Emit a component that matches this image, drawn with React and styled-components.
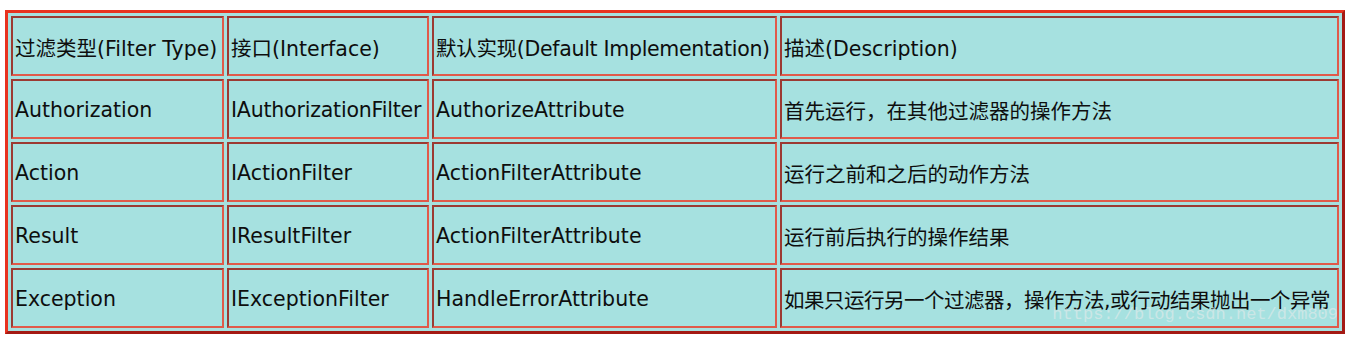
import React from "react";
import styled, { createGlobalStyle } from "styled-components";

const Global = createGlobalStyle`
  html, body { margin: 0; padding: 0; background: #ffffff; }
  body { font-family: "DejaVu Sans", "Noto Sans CJK SC", sans-serif; }
`;

const Page = styled.div`
  padding: 10px 0 0 5px;
`;

const Frame = styled.div`
  position: relative;
  width: 1340px;
  height: 324px;
  box-sizing: border-box;
  border: 3px solid;
  border-color: #e8321f #a41a14 #a41a14 #e8321f;
  background: #a6e1e0;
  padding: 3px;
  display: grid;
  grid-template-columns: 213px 202px 345px 559px;
  grid-auto-rows: 60px;
  gap: 3px;
`;

const Cell = styled.div`
  box-sizing: border-box;
  border: 2px solid;
  border-color: #9c3a33 #e05a4a #e05a4a #9c3a33;
  display: flex;
  align-items: center;
  padding: 2px 2px 0 2px;
  font-family: "DejaVu Sans", "Noto Sans CJK SC", sans-serif;
  font-size: 20.5px;
  color: #0e0e0e;
  white-space: nowrap;
  overflow: hidden;
  letter-spacing: ${(p) => p.$ls || 0}px;
`;

const Watermark = styled.div`
  position: absolute;
  right: 4px;
  bottom: 7px;
  font-family: "Liberation Mono", monospace;
  font-size: 17px;
  color: rgba(236, 236, 236, 0.55);
  pointer-events: none;
`;

const rows = [
  ["过滤类型(Filter Type)", "接口(Interface)", "默认实现(Default Implementation)", "描述(Description)"],
  ["Authorization", "IAuthorizationFilter", "AuthorizeAttribute", "首先运行，在其他过滤器的操作方法"],
  ["Action", "IActionFilter", "ActionFilterAttribute", "运行之前和之后的动作方法"],
  ["Result", "IResultFilter", "ActionFilterAttribute", "运行前后执行的操作结果"],
  ["Exception", "IExceptionFilter", "HandleErrorAttribute", "如果只运行另一个过滤器，操作方法,或行动结果抛出一个异常"],
];

const spacing = {
  "0-2": -0.3,
  "1-1": -0.2,
  "4-3": -0.5,
};

export default function App() {
  return (
    <>
      <Global />
      <Page>
        <Frame>
          {rows.map((r, i) =>
            r.map((t, j) => (
              <Cell key={`${i}-${j}`} $ls={spacing[`${i}-${j}`]}>
                {t}
              </Cell>
            ))
          )}
          <Watermark>https://blog.csdn.net/dxm809</Watermark>
        </Frame>
      </Page>
    </>
  );
}
